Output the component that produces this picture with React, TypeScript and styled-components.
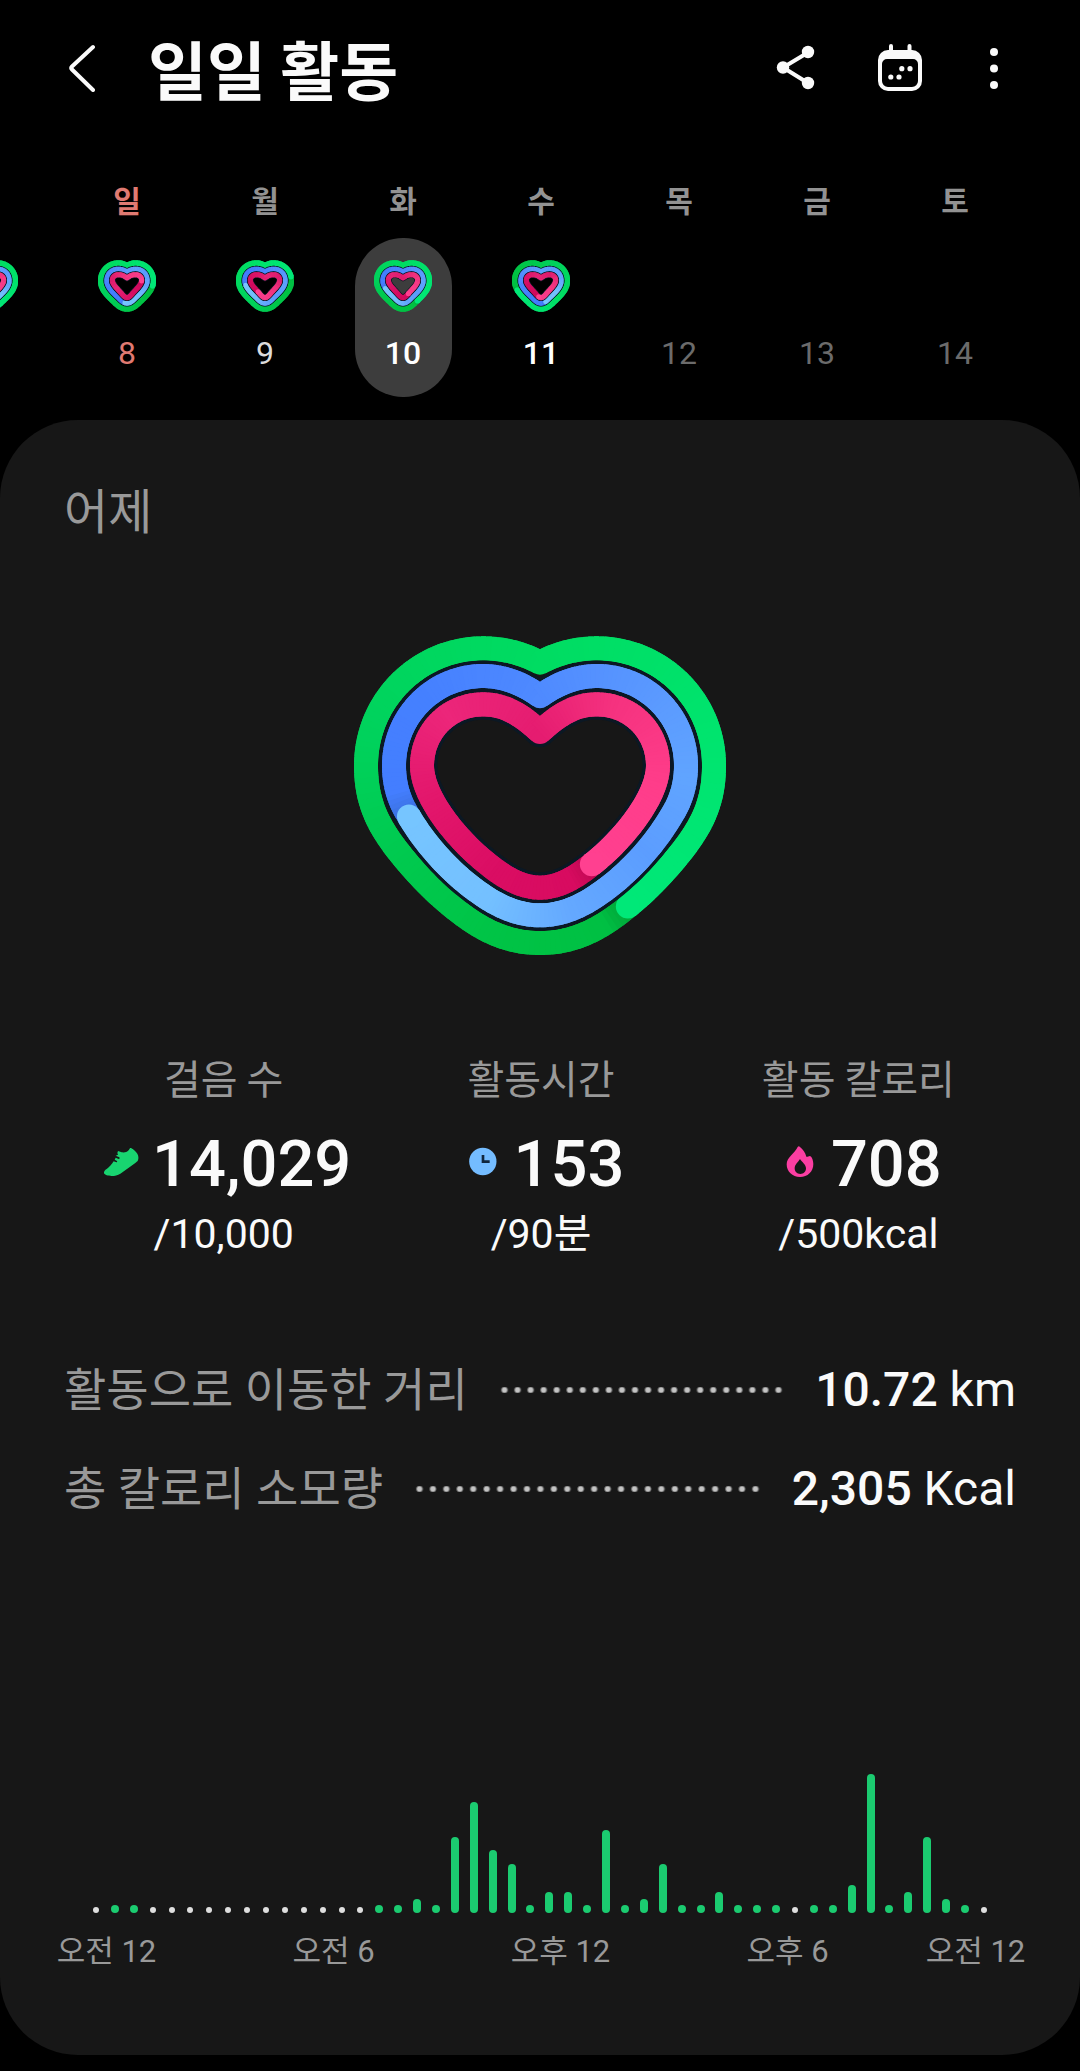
import React from "react";
import styled, { createGlobalStyle } from "styled-components";

const LATIN = `Roboto, "Noto Sans CJK KR", sans-serif`;
const HANGUL = `"Noto Sans CJK KR", Roboto, sans-serif`;

const GlobalStyle = createGlobalStyle`
  * { box-sizing: border-box; }
  body { margin: 0; background: #000; color: #fafafa; font-family: ${LATIN}; }
  button { border: 0; padding: 0; margin: 0; background: none; color: inherit; font: inherit; cursor: pointer; }
  svg { display: block; }
  dl, dd, dt, h1, h2 { margin: 0; font-weight: 400; }
`;

/* ---------- activity heart ---------- */

type Pt = [number, number];
type Ring = { start: Pt; curves: [Pt, Pt, Pt][]; width: number };
type Stop = [number, string];

const BIG_RINGS: Ring[] = [
  {
    start: [630, 158],
    width: 72,
    curves: [
      [[680, 130], [740, 115], [800, 115]],
      [[995, 115], [1152, 272], [1152, 467]],
      [[1152, 570], [1120, 640], [1060, 718]],
      [[1010, 782], [950, 845], [898, 886]],
      [[810, 960], [730, 999], [630, 999]],
    ],
  },
  {
    start: [630, 259],
    width: 72,
    curves: [
      [[685, 218], [745, 198], [800, 198]],
      [[950, 198], [1068, 320], [1068, 467]],
      [[1068, 520], [1055, 570], [1024, 618]],
      [[970, 710], [890, 795], [810, 850]],
      [[750, 893], [690, 916], [630, 916]],
    ],
  },
  {
    start: [630, 366],
    width: 72,
    curves: [
      [[690, 310], [740, 283], [800, 283]],
      [[905, 283], [984, 365], [984, 467]],
      [[984, 560], [880, 690], [783, 765]],
      [[730, 808], [680, 833], [630, 833]],
    ],
  },
];

const SMALL_RINGS: Ring[] = [
  {
    start: [87, 17],
    width: 17,
    curves: [
      [[97, 11], [105, 9], [112, 9]],
      [[143, 9], [166, 33], [166, 62]],
      [[166, 90], [145, 108], [120, 132]],
      [[108, 143], [97, 147], [87, 147]],
    ],
  },
  {
    start: [87, 35],
    width: 14,
    curves: [
      [[97, 29], [104, 27], [113, 27]],
      [[134, 27], [148, 42], [148, 62]],
      [[148, 84], [125, 102], [113, 114]],
      [[102, 126], [95, 130], [87, 130]],
    ],
  },
  {
    start: [87, 54],
    width: 15,
    curves: [
      [[97, 46], [104, 44], [113, 44]],
      [[124, 44], [131, 51], [131, 61]],
      [[131, 73], [116, 86], [104, 100]],
      [[98, 107], [93, 113], [87, 113]],
    ],
  },
];

// Colours run clockwise from just past the tip of each ring round to the tip.
const PALETTES: Stop[][] = [
  [[0, "#00a63a"], [0.014, "#00b23e"], [0.026, "#00c043"], [0.12, "#00c345"], [0.25, "#00c94e"], [0.38, "#00d25c"], [0.6, "#00dc62"], [0.8, "#00e46e"], [1, "#00e878"]],
  [[0, "#3a6fe0"], [0.015, "#3f77ee"], [0.03, "#447eff"], [0.15, "#4580ff"], [0.3, "#4f8aff"], [0.45, "#5b9aff"], [0.55, "#60a4ff"], [0.65, "#5c9dff"], [0.76, "#64a8ff"], [0.86, "#74c0ff"], [1, "#76c5ff"]],
  [[0, "#bd0853"], [0.019, "#cc0a5a"], [0.035, "#d80b60"], [0.15, "#da0d63"], [0.3, "#e3176c"], [0.43, "#ec267a"], [0.58, "#e51c70"], [0.7, "#f5327f"], [0.85, "#ff3d8a"], [1, "#ff4090"]],
];

const mixHex = (a: string, b: string, k: number) => {
  const read = (h: string) => [1, 3, 5].map((i) => parseInt(h.slice(i, i + 2), 16));
  const [x, y] = [read(a), read(b)];
  return `rgb(${x.map((v, i) => Math.round(v + (y[i] - v) * k)).join(",")})`;
};

const colourAt = (stops: Stop[], t: number) => {
  for (let i = 1; i < stops.length; i++) {
    if (t <= stops[i][0]) {
      const [t0, c0] = stops[i - 1];
      const [t1, c1] = stops[i];
      return mixHex(c0, c1, (t - t0) / (t1 - t0));
    }
  }
  return stops[stops.length - 1][1];
};

const samplePoints = (ring: Ring, axis: number, steps: number): Pt[] => {
  const half: Pt[] = [ring.start];
  let p0 = ring.start;
  ring.curves.forEach(([p1, p2, p3]) => {
    for (let i = 1; i <= 60; i++) {
      const t = i / 60;
      const u = 1 - t;
      half.push([0, 1].map((k) => u * u * u * p0[k] + 3 * u * u * t * p1[k] + 3 * u * t * t * p2[k] + t * t * t * p3[k]) as Pt);
    }
    p0 = p3;
  });
  const mirrored = half.slice(0, -1).reverse().map(([x, y]): Pt => [2 * axis - x, y]);
  const all = half.concat(mirrored);
  const lengths = [0];
  for (let i = 1; i < all.length; i++) {
    lengths.push(lengths[i - 1] + Math.hypot(all[i][0] - all[i - 1][0], all[i][1] - all[i - 1][1]));
  }
  const total = lengths[lengths.length - 1];
  const out: Pt[] = [];
  let j = 1;
  for (let s = 0; s < steps; s++) {
    const d = (total * s) / steps;
    while (lengths[j] < d) j++;
    const k = (d - lengths[j - 1]) / (lengths[j] - lengths[j - 1]);
    out.push([all[j - 1][0] + (all[j][0] - all[j - 1][0]) * k, all[j - 1][1] + (all[j][1] - all[j - 1][1]) * k]);
  }
  return out;
};

const toPath = (pts: Pt[]) => "M" + pts.map(([x, y]) => `${x.toFixed(1)} ${y.toFixed(1)}`).join("L");

const STEPS = 200;

function RingShape({ ring, axis, tip, stops, underlay }: { ring: Ring; axis: number; tip: number; stops: Stop[]; underlay: number }) {
  const pts = samplePoints(ring, axis, STEPS);
  const offset = Math.round(tip * STEPS);
  const at = (i: number) => pts[(i + offset) % STEPS];
  const end = at(0);
  return (
    <g fill="none" strokeLinejoin="round">
      {underlay > 0 && <path d={toPath(pts) + "Z"} stroke="#0b1824" strokeWidth={ring.width + underlay} />}
      {Array.from({ length: STEPS }, (_, i) => (
        <path
          key={i}
          d={toPath(i < STEPS - 1 ? [at(i), at(i + 1), at(i + 2)] : [at(i), at(i + 1)])}
          stroke={colourAt(stops, i / STEPS)}
          strokeWidth={ring.width}
        />
      ))}
      <circle cx={end[0]} cy={end[1]} r={ring.width / 2} fill={stops[stops.length - 1][1]} />
    </g>
  );
}

function ActivityHeart({ size, tips, label }: { size: "big" | "small"; tips: number[]; label: string }) {
  const big = size === "big";
  const rings = big ? BIG_RINGS : SMALL_RINGS;
  return (
    <svg
      role="img"
      aria-label={label}
      width={big ? 372 : 58}
      height={big ? 320 : 52}
      viewBox={big ? "72 78 1116 960" : "0 0 174 156"}
    >
      {rings.map((ring, i) => (
        <RingShape key={i} ring={ring} axis={big ? 630 : 87} tip={tips[i]} stops={PALETTES[i]} underlay={i === 0 ? 0 : big ? 20 : 5} />
      ))}
    </svg>
  );
}

/* ---------- header ---------- */

const Header = styled.header`
  display: flex;
  align-items: center;
  height: 136px;
  padding: 0 72px 0 58px;
`;

const Title = styled.h1`
  flex: 1;
  margin: 0 0 2px 42px;
  font: 700 64px/80px ${HANGUL};
`;

const Actions = styled.div`
  display: flex;
  gap: 56px;
`;

/* ---------- week strip ---------- */

const Week = styled.nav`
  display: flex;
  justify-content: flex-end;
  padding: 43px 56px 23px 58px;
  overflow: hidden;
`;

const Day = styled.div`
  flex: 0 0 calc(100% / 7);
  display: flex;
  flex-direction: column;
  align-items: center;
  gap: 19px;
`;

const Weekday = styled.span<{ $sunday?: boolean }>`
  height: 40px;
  font: 700 30px/40px ${HANGUL};
  color: ${(p) => (p.$sunday ? "#e07a72" : "#929292")};
`;

type Tone = "sunday" | "past" | "active" | "future";
const TONES: Record<Tone, string> = { sunday: "#e07a72", past: "#dcdcdc", active: "#fff", future: "#6b6b6b" };

const DayButton = styled.button<{ $selected?: boolean }>`
  display: flex;
  flex-direction: column;
  align-items: center;
  justify-content: space-between;
  width: 97px;
  height: 159px;
  padding: 22px 0 24px;
  border-radius: 48px;
  background: ${(p) => (p.$selected ? "#3d3d3d" : "transparent")};
`;

const DayHeart = styled.span`
  height: 52px;
`;

const DayNumber = styled.span<{ $tone: Tone }>`
  height: 40px;
  font-size: 32px;
  line-height: 40px;
  font-weight: ${(p) => (p.$tone === "active" ? 500 : 400)};
  color: ${(p) => TONES[p.$tone]};
`;

/* ---------- card ---------- */

const Card = styled.main`
  padding: 58px 0 83px;
  border-radius: 78px;
  background: #171717;
  margin-bottom: 16px;
`;

const CardTitle = styled.h2`
  padding: 0 64px;
  font: 400 48px/60px ${HANGUL};
  color: #999;
`;

const HeartArea = styled.div`
  display: flex;
  justify-content: center;
  padding: 98px 0 96px;
`;

const Stats = styled.dl`
  display: grid;
  grid-template-columns: repeat(3, 1fr);
  padding: 0 63px 0 65px;
`;

const Stat = styled.div`
  display: flex;
  flex-direction: column;
  align-items: center;
`;

const StatLabel = styled.dt`
  font: 400 40px/50px ${HANGUL};
  color: #999;
`;

const StatValue = styled.dd`
  display: flex;
  align-items: center;
  gap: 6px;
  margin-top: 24px;
  font-size: 65px;
  line-height: 76px;
  font-weight: 500;
`;

const StatGoal = styled.dd`
  margin-top: 7px;
  font-size: 41px;
  line-height: 50px;
`;

const Details = styled.dl`
  display: flex;
  flex-direction: column;
  gap: 39px;
  padding: 101px 64px 0;
`;

const DetailRow = styled.div`
  display: flex;
  align-items: center;
  height: 60px;
`;

const DetailLabel = styled.dt`
  font-size: 46px;
  line-height: 60px;
  color: #999;
`;

const Leader = styled.span`
  flex: 1;
  height: 6px;
  margin: 0 30px;
  background: radial-gradient(circle at center, #c4c4c4 2px, #c4c4c400 4px) left center / 13px 6px;
  background-repeat: space no-repeat;
`;

const DetailValue = styled.dd`
  font-size: 48px;
  line-height: 60px;
`;

const Strong = styled.b`
  font-weight: 500;
`;

const Chart = styled.figure`
  margin: 255px 0 0;
`;

const Bars = styled.div`
  display: flex;
  align-items: flex-end;
  justify-content: space-between;
  height: 139px;
  padding: 0 92px;
`;

const Bar = styled.span`
  width: 8px;
  border-radius: 4px;
  background: #1bcb70;
`;

const EmptyBar = styled.span`
  width: 6px;
  height: 6px;
  margin: 0 1px;
  border-radius: 3px;
  background: #dedede;
`;

const Axis = styled.figcaption`
  display: grid;
  grid-template-columns: 97px 1fr 97px 1fr 97px 1fr 97px 0.7fr 97px;
  padding: 19px 56px 0 58px;
`;

const Tick = styled.span<{ $column: number }>`
  grid-row: 1;
  grid-column: ${(p) => p.$column};
  justify-self: center;
  white-space: nowrap;
  font-size: 31px;
  line-height: 40px;
  color: #999;
`;

/* ---------- icons ---------- */

const BackIcon = () => (
  <svg width="48" height="48" viewBox="0 0 48 48" fill="none" stroke="#fafafa" strokeWidth="4" strokeLinecap="round" strokeLinejoin="round">
    <path d="M35 3L14 22.500Q12.500 24 14 25.500L35 46" />
  </svg>
);

const ShareIcon = () => (
  <svg width="48" height="48" viewBox="0 0 48 48" fill="#fafafa">
    <path d="M36 8.500L11 23.500L36 39" fill="none" stroke="#fafafa" strokeWidth="4" />
    <circle cx="36" cy="8" r="6.200" />
    <circle cx="11" cy="23.500" r="6.200" />
    <circle cx="36" cy="39" r="6.200" />
  </svg>
);

const CalendarIcon = () => (
  <svg width="48" height="48" viewBox="0 0 48 48" fill="#fafafa">
    <path d="M15 2v6M33.500 2v6" stroke="#fafafa" strokeWidth="4" strokeLinecap="round" />
    <path
      fillRule="evenodd"
      d="M12 6h24a10 10 0 0 1 10 10v21a10 10 0 0 1-10 10H12A10 10 0 0 1 2 37V16A10 10 0 0 1 12 6ZM11 15a5 5 0 0 0-5 5v17a6 6 0 0 0 6 6h24a6 6 0 0 0 6-6V20a5 5 0 0 0-5-5Z"
    />
    <circle cx="25.800" cy="24.700" r="2.600" />
    <circle cx="34" cy="24.700" r="2.600" />
    <circle cx="14.800" cy="33" r="2.600" />
    <circle cx="23" cy="33" r="2.600" />
  </svg>
);

const MoreIcon = () => (
  <svg width="28" height="48" viewBox="0 0 28 48" fill="#fafafa">
    <circle cx="14" cy="8" r="4" />
    <circle cx="14" cy="24.500" r="4" />
    <circle cx="14" cy="41" r="4" />
  </svg>
);

const ShoeIcon = () => (
  <svg width="50" height="50" viewBox="137 324 150 150" aria-hidden="true">
    <path
      fill="#18d470"
      d="M242 351C251 356 257 362 261 368C265 375 265 382 263 388C261 392 258 394 254 397L210 428C202 433 193 435 184 435C173 435 163 432 161 427C160 422 163 417 170 413C177 408 184 400 190 391L198 394Q202 394 200 390L193 386L196 380L205 384Q210 384 207 379L196 374L203 371L201 366L203 360L214 364C224 366 233 361 236 356C238 352 240 350 242 351Z"
    />
  </svg>
);

const ClockIcon = () => (
  <svg width="50" height="50" viewBox="1220 324 150 150" aria-hidden="true">
    <circle cx="1294.500" cy="391.500" r="41" fill="#74bcff" />
    <path d="M1295 372V392H1315" fill="none" stroke="#10263c" strokeWidth="8" />
  </svg>
);

const FlameIcon = () => (
  <svg width="50" height="50" viewBox="703 324 150 150" aria-hidden="true">
    <path
      fill="#fb3ea2"
      fillRule="evenodd"
      d="M771 348Q774 344 778 348C787 355 794 365 797 377C800 379 803 375 808 375C814 377 818 389 818 399C818 422 801 438 778 438C755 438 738 422 738 400C738 379 762 367 771 348ZM778 384C773 393 762 400 762 412C762 422 769 429 779 429C789 429 796 422 796 412C796 400 784 394 778 384Z"
    />
  </svg>
);

/* ---------- data ---------- */

type DayData = { weekday: string; date: number | null; tone: Tone; tips?: number[]; selected?: boolean };

const DAYS: DayData[] = [
  { weekday: "", date: null, tone: "past", tips: [0.46, 0.5, 0.38] },
  { weekday: "일", date: 8, tone: "sunday", tips: [0.27, 0.52, 0.23] },
  { weekday: "월", date: 9, tone: "past", tips: [0.21, 0.73, 0.61] },
  { weekday: "화", date: 10, tone: "active", tips: [0.39, 0.7, 0.42], selected: true },
  { weekday: "수", date: 11, tone: "active", tips: [0.7, 0.46, 0.53] },
  { weekday: "목", date: 12, tone: "future" },
  { weekday: "금", date: 13, tone: "future" },
  { weekday: "토", date: 14, tone: "future" },
];

const STATS = [
  { label: "걸음 수", icon: <ShoeIcon />, value: "14,029", goal: "/10,000" },
  { label: "활동시간", icon: <ClockIcon />, value: "153", goal: "/90분" },
  { label: "활동 칼로리", icon: <FlameIcon />, value: "708", goal: "/500kcal" },
];

const DETAILS = [
  { label: "활동으로 이동한 거리", value: "10.72", unit: "km" },
  { label: "총 칼로리 소모량", value: "2,305", unit: "Kcal" },
];

// One entry per half hour; 0 means no activity.
const BAR_HEIGHTS = [
  0, 8, 8, 0, 0, 0, 0, 0, 0, 0, 0, 0, 0, 0, 0, 8, 8, 14, 8, 76, 111, 63, 49, 8,
  21, 21, 8, 83, 8, 14, 49, 8, 8, 21, 8, 8, 8, 0, 8, 8, 28, 139, 8, 21, 76, 14, 8, 0,
];

const TICKS = ["오전 12", "오전 6", "오후 12", "오후 6", "오전 12"];

export default function App() {
  return (
    <>
      <GlobalStyle />
      <Header>
        <button type="button" aria-label="뒤로"><BackIcon /></button>
        <Title>일일 활동</Title>
        <Actions>
          <button type="button" aria-label="공유"><ShareIcon /></button>
          <button type="button" aria-label="달력"><CalendarIcon /></button>
          <button type="button" aria-label="더보기"><MoreIcon /></button>
        </Actions>
      </Header>
      <Week>
        {DAYS.map((d, i) => (
          <Day key={i}>
            <Weekday $sunday={d.tone === "sunday"}>{d.weekday}</Weekday>
            <DayButton type="button" $selected={d.selected} aria-pressed={!!d.selected}>
              <DayHeart>{d.tips && <ActivityHeart size="small" tips={d.tips} label="활동 기록" />}</DayHeart>
              <DayNumber $tone={d.tone}>{d.date}</DayNumber>
            </DayButton>
          </Day>
        ))}
      </Week>
      <Card>
        <CardTitle>어제</CardTitle>
        <HeartArea>
          <ActivityHeart size="big" tips={[0.403, 0.7, 0.416]} label="일일 활동 하트" />
        </HeartArea>
        <Stats>
          {STATS.map((s) => (
            <Stat key={s.label}>
              <StatLabel>{s.label}</StatLabel>
              <StatValue>{s.icon}{s.value}</StatValue>
              <StatGoal>{s.goal}</StatGoal>
            </Stat>
          ))}
        </Stats>
        <Details>
          {DETAILS.map((d) => (
            <DetailRow key={d.label}>
              <DetailLabel>{d.label}</DetailLabel>
              <Leader />
              <DetailValue><Strong>{d.value}</Strong> {d.unit}</DetailValue>
            </DetailRow>
          ))}
        </Details>
        <Chart>
          <Bars>
            {BAR_HEIGHTS.map((h, i) => (h ? <Bar key={i} style={{ height: h }} /> : <EmptyBar key={i} />))}
          </Bars>
          <Axis>
            {TICKS.map((t, i) => (
              <Tick key={i} $column={i * 2 + 1}>{t}</Tick>
            ))}
          </Axis>
        </Chart>
      </Card>
    </>
  );
}
